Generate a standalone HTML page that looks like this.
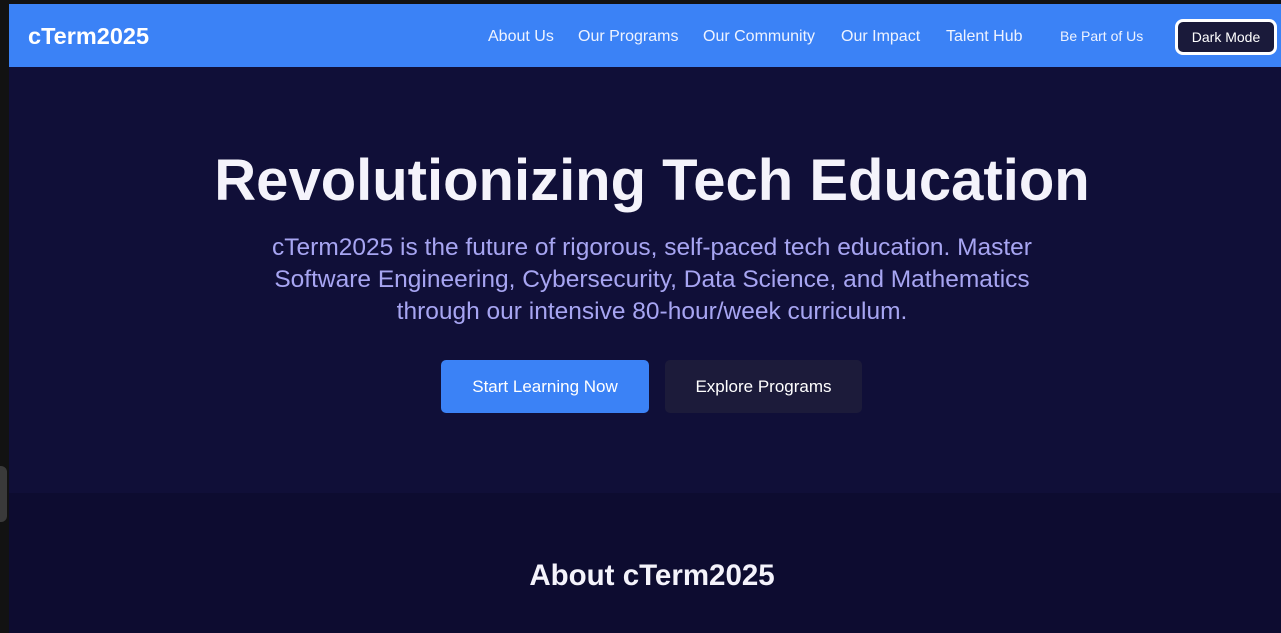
<!DOCTYPE html>
<html><head><meta charset="utf-8"><style>
*{margin:0;padding:0;box-sizing:border-box}
body{width:1281px;height:633px;overflow:hidden;background:#121212;font-family:"Liberation Sans",sans-serif;position:relative}
.main{position:absolute;left:9px;top:4px;width:1272px;height:629px;background:#100f38}
.lower{position:absolute;left:0;top:489px;width:100%;height:140px;background:#0d0c30}
nav{position:absolute;left:0;top:0;width:100%;height:63px;background:#3b82f6;color:#fff}
.logo{position:absolute;left:19px;top:19px;font-size:23.5px;font-weight:bold}
.links a{position:absolute;top:24px;font-size:16px;color:#eef3ff;text-decoration:none;white-space:nowrap}
.dm{position:absolute;left:1166px;top:15px;width:102px;height:36px;border:3px solid #fff;border-radius:8px;background:#1a1a3a;color:#fff;font-size:14px;text-align:center;line-height:30px}
h1{position:absolute;left:7px;width:100%;top:143px;text-align:center;color:#f4f3fb;font-size:58px;font-weight:bold}
.sub{position:absolute;left:7px;width:100%;top:228px;text-align:center;color:#a7a5f2;font-size:24.5px;line-height:32px}
.btn{position:absolute;top:356px;height:53px;border-radius:5px;color:#fff;font-size:17px;text-align:center;line-height:53px}
h2{position:absolute;left:7px;width:100%;top:555px;text-align:center;color:#f4f3fb;font-size:29.5px;font-weight:bold}
.tab{position:absolute;left:0;top:466px;width:7px;height:56px;background:#3a3a3a;border-radius:0 6px 6px 0}
</style></head><body>
<div class="tab"></div>
<div class="main">
<div class="lower"></div>
<nav>
<div class="logo">cTerm2025</div>
<div class="links">
<a style="left:479px">About Us</a>
<a style="left:569px">Our Programs</a>
<a style="left:694px">Our Community</a>
<a style="left:832px">Our Impact</a>
<a style="left:937px">Talent Hub</a>
<a style="left:1051px;font-size:14px;top:24px">Be Part of Us</a>
</div>
<div class="dm">Dark Mode</div>
</nav>
<h1>Revolutionizing Tech Education</h1>
<div class="sub">cTerm2025 is the future of rigorous, self-paced tech education. Master<br>Software Engineering, Cybersecurity, Data Science, and Mathematics<br>through our intensive 80-hour/week curriculum.</div>
<div class="btn" style="left:432px;width:208px;background:#3b82f6">Start Learning Now</div>
<div class="btn" style="left:656px;width:197px;background:#1c1b3a">Explore Programs</div>
<h2>About cTerm2025</h2>
</div>
</body></html>
